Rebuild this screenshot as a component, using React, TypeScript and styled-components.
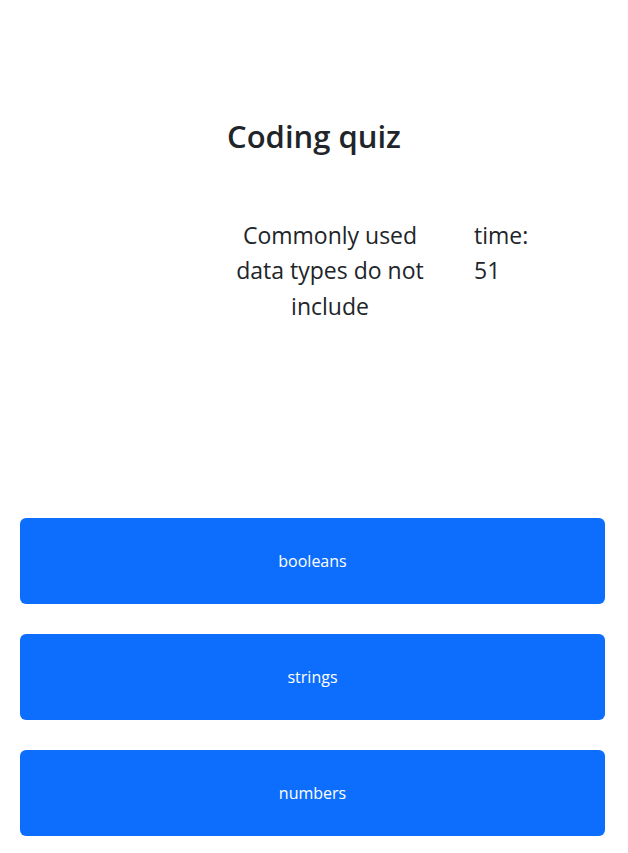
import React from "react";
import styled, { createGlobalStyle } from "styled-components";

const GlobalStyle = createGlobalStyle`
  *, *::before, *::after { box-sizing: border-box; }
  html, body { margin: 0; padding: 0; background: #fff; }
  body {
    font-family: "Open Sans", "Noto Sans", sans-serif;
    color: #212529;
    line-height: 1.5;
  }
`;

const Page = styled.main`
  display: flex;
  flex-direction: column;
  width: 628px;
  min-height: 853px;
  padding-top: 118px;
`;

const Title = styled.h1`
  margin: 0;
  text-align: center;
  font-size: 31px;
  line-height: 37.7px;
  font-weight: 600;
  color: #212529;
`;

const QuestionRow = styled.section`
  display: flex;
  align-items: flex-start;
  gap: 39px;
  margin-top: 62px;
  padding-left: 225px;
`;

const Question = styled.p`
  margin: 0;
  width: 210px;
  text-align: center;
  font-size: 23px;
  line-height: 35.5px;
`;

const Timer = styled.div`
  display: flex;
  flex-direction: column;
  font-size: 23px;
  line-height: 35.5px;
`;

const Answers = styled.div`
  display: flex;
  flex-direction: column;
  gap: 30px;
  margin-top: 194px;
  padding: 0 23px 0 20px;
`;

const AnswerButton = styled.button`
  display: flex;
  align-items: center;
  justify-content: center;
  height: 86px;
  width: 100%;
  border: none;
  border-radius: 6px;
  background: #0d6efd;
  color: #fff;
  font-family: "Open Sans", "Noto Sans", sans-serif;
  font-size: 16px;
  font-weight: 400;
  cursor: pointer;
`;

const answers = ["booleans", "strings", "numbers"];

export default function App() {
  return (
    <>
      <GlobalStyle />
      <Page>
        <Title>Coding quiz</Title>
        <QuestionRow>
          <Question>Commonly used data types do not include</Question>
          <Timer>
            <span>time:</span>
            <span>51</span>
          </Timer>
        </QuestionRow>
        <Answers>
          {answers.map((a) => (
            <AnswerButton key={a}>{a}</AnswerButton>
          ))}
        </Answers>
      </Page>
    </>
  );
}
